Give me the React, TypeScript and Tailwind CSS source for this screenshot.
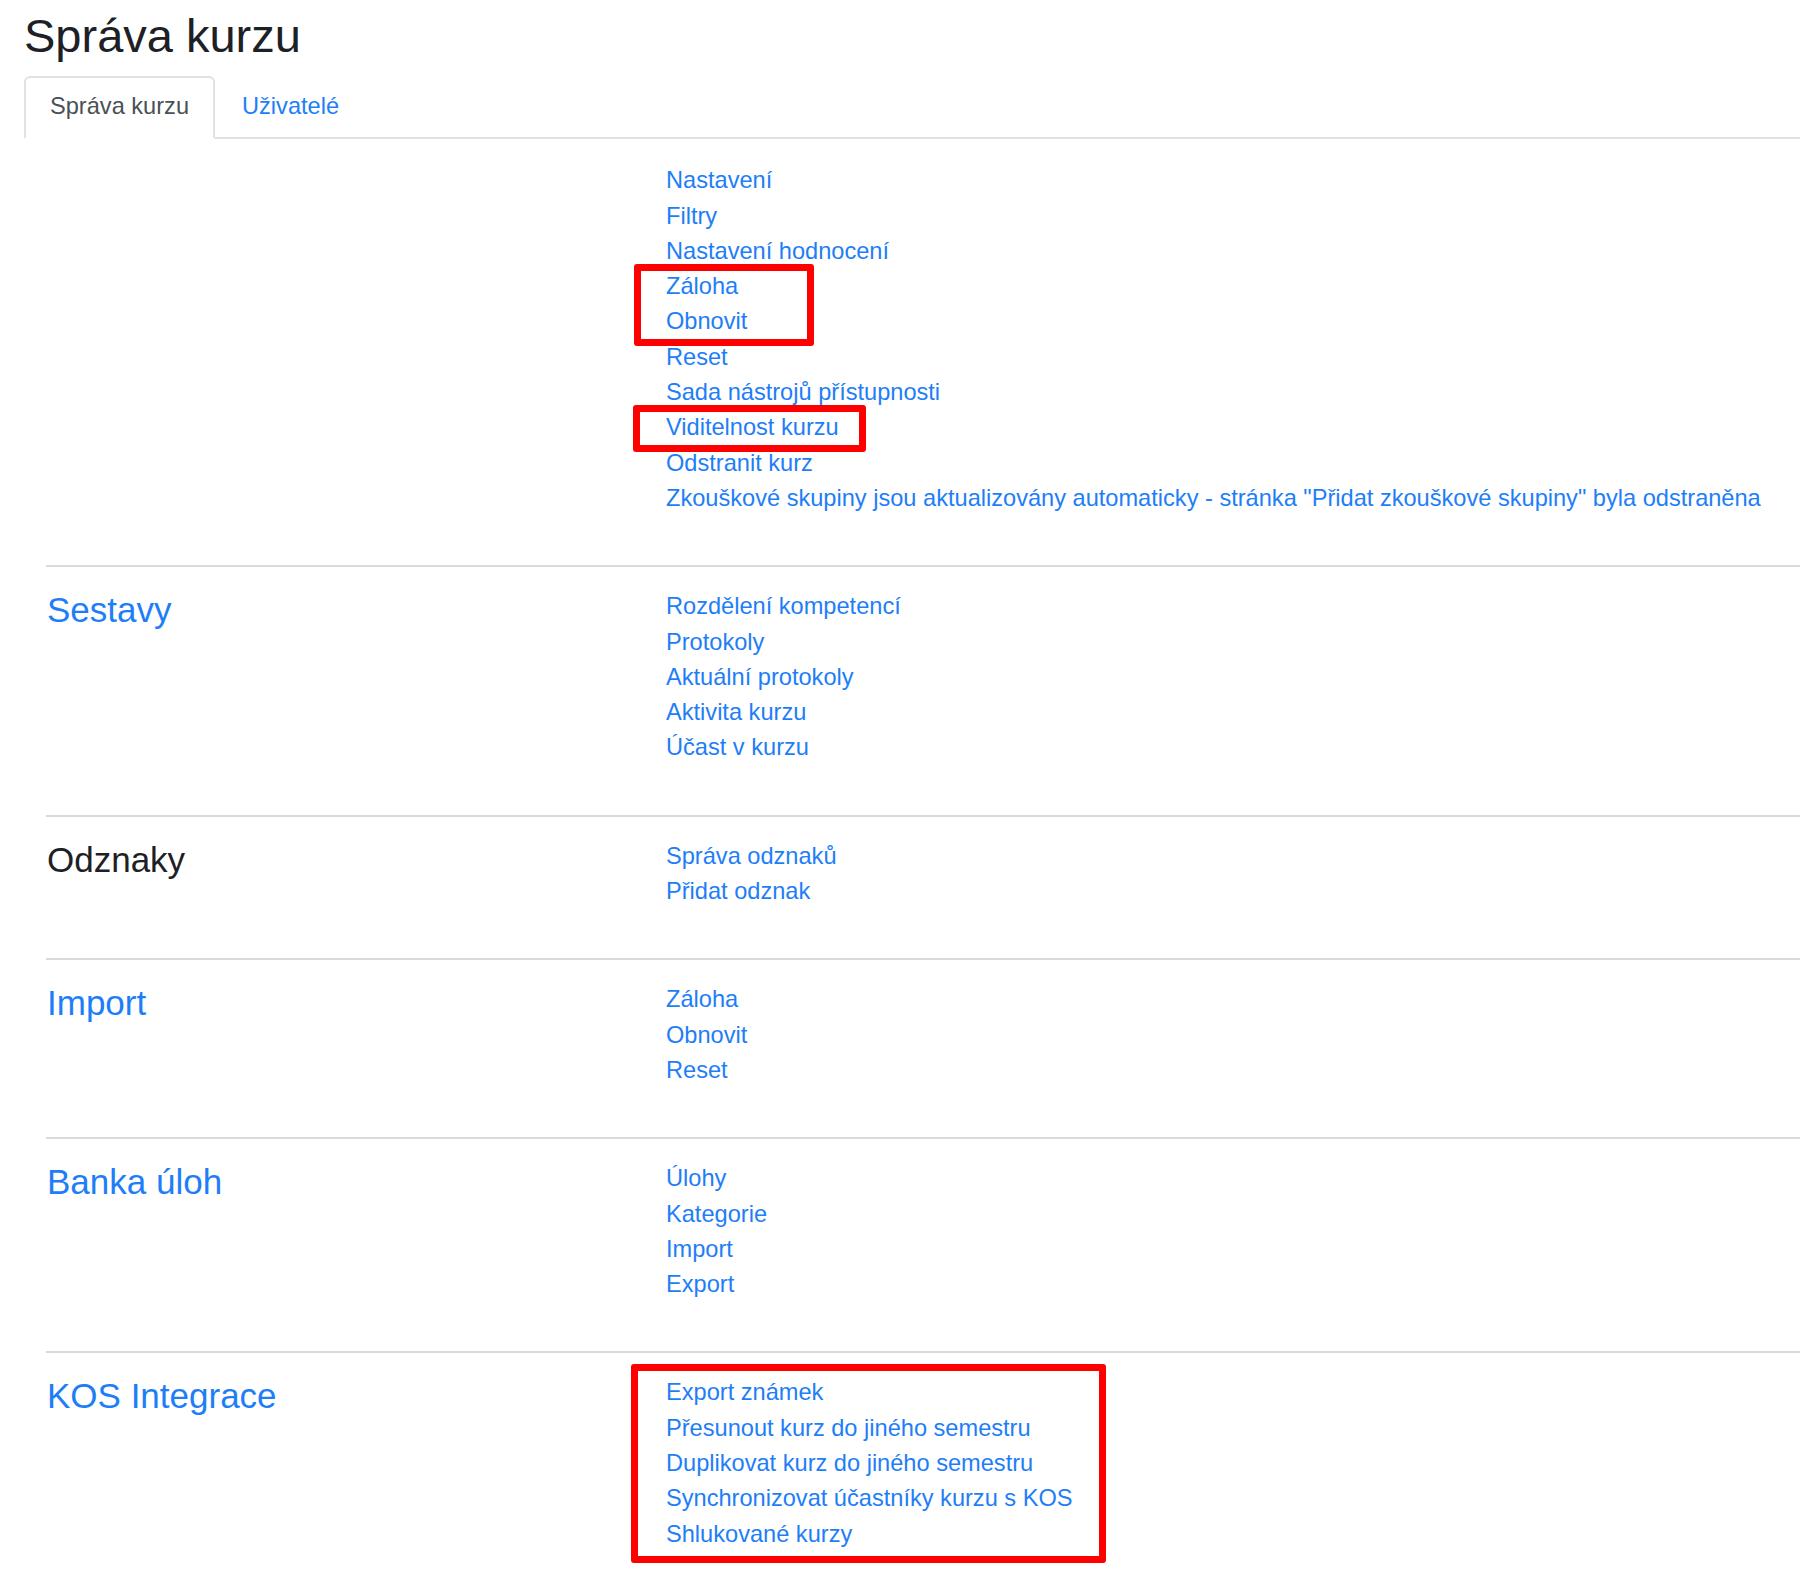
import type { ReactNode } from 'react'

/**
 * Course administration page
 * Section headings on the left, link lists on the right
 */

const linkCls = 'block h-[35.3px] leading-[35.3px] text-[#1e7ef7] whitespace-nowrap hover:underline'

function Link({ children }: { children: ReactNode }) {
  return (
    <a href="#" className={linkCls}>
      {children}
    </a>
  )
}

// red annotation frame drawn over a group of links
function Marked({ box, children }: { box: string; children: ReactNode }) {
  return (
    <div className="relative">
      {children}
      <div className={`absolute border-[7px] border-[#ff0000] rounded-[3px] pointer-events-none ${box}`} />
    </div>
  )
}

interface SectionProps {
  title?: string
  isLink?: boolean
  first?: boolean
  children: ReactNode
}

function Section({ title, isLink = true, first = false, children }: SectionProps) {
  return (
    <div
      className={
        first
          ? 'flex ml-[22px] pt-[24px] pb-[49px]'
          : 'flex ml-[22px] pt-[22px] pb-[49px] border-t-2 border-[#d6d9dd]'
      }
    >
      <div className="w-[620px] shrink-0 pl-[1px]">
        {title && (
          <h4
            className={`text-[35px] leading-[42px] ${isLink ? 'text-[#1e7ef7]' : 'text-[#1d2125]'}`}
          >
            {title}
          </h4>
        )}
      </div>
      <div className="flex-1">{children}</div>
    </div>
  )
}

export default function App() {
  return (
    <div
      className="min-h-screen bg-white pl-[24px] text-[23.6px] text-[#1d2125]"
      style={{ fontFamily: '"Liberation Sans", Arial, sans-serif' }}
    >
      <h2 className="pt-[8px] text-[47px] leading-[56px] text-[#1d2125]">Správa kurzu</h2>

      {/* tabs */}
      <div className="mt-[12px] flex border-b-2 border-[#dee2e6]">
        <div className="-mb-[2px] rounded-t-[6px] border-2 border-[#dee2e6] border-b-white bg-white px-[24px] pt-[11px] pb-[13px] leading-[35.3px] text-[#495057]">
          Správa kurzu
        </div>
        <a
          href="#"
          className="-mb-[2px] border-2 border-transparent px-[25px] pt-[11px] pb-[13px] leading-[35.3px] text-[#1e7ef7]"
        >
          Uživatelé
        </a>
      </div>

      <Section first>
        <Link>Nastavení</Link>
        <Link>Filtry</Link>
        <Link>Nastavení hodnocení</Link>
        <Marked box="-left-[32px] -top-[5px] -bottom-[6px] w-[180px]">
          <Link>Záloha</Link>
          <Link>Obnovit</Link>
        </Marked>
        <Link>Reset</Link>
        <Link>Sada nástrojů přístupnosti</Link>
        <Marked box="-left-[33px] -top-[5px] -bottom-[6px] w-[233px]">
          <Link>Viditelnost kurzu</Link>
        </Marked>
        <Link>Odstranit kurz</Link>
        <Link>
          Zkouškové skupiny jsou aktualizovány automaticky - stránka "Přidat zkouškové skupiny" byla
          odstraněna
        </Link>
      </Section>

      <Section title="Sestavy">
        <Link>Rozdělení kompetencí</Link>
        <Link>Protokoly</Link>
        <Link>Aktuální protokoly</Link>
        <Link>Aktivita kurzu</Link>
        <Link>Účast v kurzu</Link>
      </Section>

      <Section title="Odznaky" isLink={false}>
        <Link>Správa odznaků</Link>
        <Link>Přidat odznak</Link>
      </Section>

      <Section title="Import">
        <Link>Záloha</Link>
        <Link>Obnovit</Link>
        <Link>Reset</Link>
      </Section>

      <Section title="Banka úloh">
        <Link>Úlohy</Link>
        <Link>Kategorie</Link>
        <Link>Import</Link>
        <Link>Export</Link>
      </Section>

      <Section title="KOS Integrace">
        <Marked box="-left-[35px] -top-[11px] -bottom-[11px] w-[475px]">
          <Link>Export známek</Link>
          <Link>Přesunout kurz do jiného semestru</Link>
          <Link>Duplikovat kurz do jiného semestru</Link>
          <Link>Synchronizovat účastníky kurzu s KOS</Link>
          <Link>Shlukované kurzy</Link>
        </Marked>
      </Section>
    </div>
  )
}
